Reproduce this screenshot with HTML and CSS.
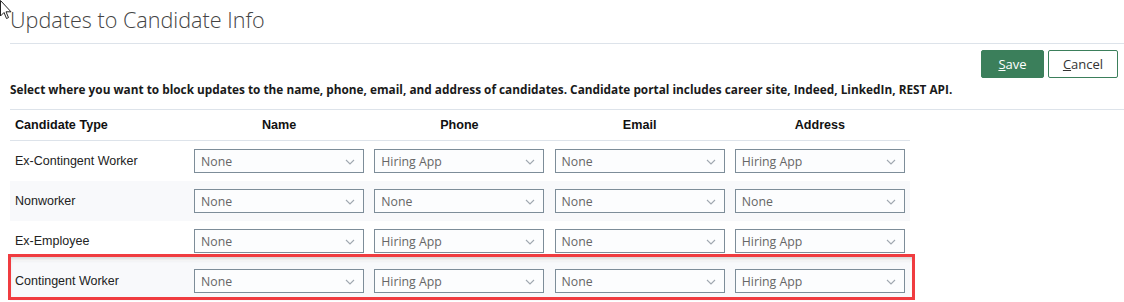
FILE: index.html
```html
<!DOCTYPE html>
<html lang="en">
<head>
  <meta charset="UTF-8" />
  <title>Updates to Candidate Info</title>
  <link rel="stylesheet" href="styles.css">
</head>
<body>
  <svg class="cursor" width="13" height="20" viewBox="0 0 13 20">
    <path d="M0.5 0.5 L0.5 16 L4 12.5 L6.5 18.5 L8.5 17.6 L6 11.8 L11 11.8 Z" fill="#fff" stroke="#222" stroke-width="1"/>
  </svg>

  <div class="page">
    <h1 class="title">Updates to Candidate Info</h1>

    <div class="toolbar">
      <button class="btn btn-save"><u>S</u>ave</button>
      <button class="btn btn-cancel"><u>C</u>ancel</button>
    </div>

    <p class="intro">Select where you want to block updates to the name, phone, email, and address of candidates. Candidate portal includes career site, Indeed, LinkedIn, REST API.</p>

    <div class="table-wrap">
      <table class="grid">
        <thead>
          <tr>
            <th class="type">Candidate Type</th>
            <th>Name</th>
            <th>Phone</th>
            <th>Email</th>
            <th>Address</th>
          </tr>
        </thead>
        <tbody>
          <tr>
            <td class="type">Ex-Contingent Worker</td>
            <td><div class="select"><span>None</span><svg width="10" height="6" viewBox="0 0 10 6"><path d="M1 1 L5 5 L9 1" fill="none" stroke="#a0a8b0" stroke-width="1.1"/></svg></div></td>
            <td><div class="select"><span>Hiring App</span><svg width="10" height="6" viewBox="0 0 10 6"><path d="M1 1 L5 5 L9 1" fill="none" stroke="#a0a8b0" stroke-width="1.1"/></svg></div></td>
            <td><div class="select"><span>None</span><svg width="10" height="6" viewBox="0 0 10 6"><path d="M1 1 L5 5 L9 1" fill="none" stroke="#a0a8b0" stroke-width="1.1"/></svg></div></td>
            <td><div class="select"><span>Hiring App</span><svg width="10" height="6" viewBox="0 0 10 6"><path d="M1 1 L5 5 L9 1" fill="none" stroke="#a0a8b0" stroke-width="1.1"/></svg></div></td>
          </tr>
          <tr class="alt">
            <td class="type">Nonworker</td>
            <td><div class="select"><span>None</span><svg width="10" height="6" viewBox="0 0 10 6"><path d="M1 1 L5 5 L9 1" fill="none" stroke="#a0a8b0" stroke-width="1.1"/></svg></div></td>
            <td><div class="select"><span>None</span><svg width="10" height="6" viewBox="0 0 10 6"><path d="M1 1 L5 5 L9 1" fill="none" stroke="#a0a8b0" stroke-width="1.1"/></svg></div></td>
            <td><div class="select"><span>None</span><svg width="10" height="6" viewBox="0 0 10 6"><path d="M1 1 L5 5 L9 1" fill="none" stroke="#a0a8b0" stroke-width="1.1"/></svg></div></td>
            <td><div class="select"><span>None</span><svg width="10" height="6" viewBox="0 0 10 6"><path d="M1 1 L5 5 L9 1" fill="none" stroke="#a0a8b0" stroke-width="1.1"/></svg></div></td>
          </tr>
          <tr>
            <td class="type">Ex-Employee</td>
            <td><div class="select"><span>None</span><svg width="10" height="6" viewBox="0 0 10 6"><path d="M1 1 L5 5 L9 1" fill="none" stroke="#a0a8b0" stroke-width="1.1"/></svg></div></td>
            <td><div class="select"><span>Hiring App</span><svg width="10" height="6" viewBox="0 0 10 6"><path d="M1 1 L5 5 L9 1" fill="none" stroke="#a0a8b0" stroke-width="1.1"/></svg></div></td>
            <td><div class="select"><span>None</span><svg width="10" height="6" viewBox="0 0 10 6"><path d="M1 1 L5 5 L9 1" fill="none" stroke="#a0a8b0" stroke-width="1.1"/></svg></div></td>
            <td><div class="select"><span>Hiring App</span><svg width="10" height="6" viewBox="0 0 10 6"><path d="M1 1 L5 5 L9 1" fill="none" stroke="#a0a8b0" stroke-width="1.1"/></svg></div></td>
          </tr>
          <tr class="alt marked">
            <td class="type">Contingent Worker</td>
            <td><div class="select"><span>None</span><svg width="10" height="6" viewBox="0 0 10 6"><path d="M1 1 L5 5 L9 1" fill="none" stroke="#a0a8b0" stroke-width="1.1"/></svg></div></td>
            <td><div class="select"><span>Hiring App</span><svg width="10" height="6" viewBox="0 0 10 6"><path d="M1 1 L5 5 L9 1" fill="none" stroke="#a0a8b0" stroke-width="1.1"/></svg></div></td>
            <td><div class="select"><span>None</span><svg width="10" height="6" viewBox="0 0 10 6"><path d="M1 1 L5 5 L9 1" fill="none" stroke="#a0a8b0" stroke-width="1.1"/></svg></div></td>
            <td><div class="select"><span>Hiring App</span><svg width="10" height="6" viewBox="0 0 10 6"><path d="M1 1 L5 5 L9 1" fill="none" stroke="#a0a8b0" stroke-width="1.1"/></svg></div></td>
          </tr>
        </tbody>
      </table>
      <div class="highlight"></div>
    </div>
  </div>
</body>
</html>
```

FILE: styles.css
```css
body {
  margin: 0;
  background: #fff;
  color: #222;
  font-family: 'Open Sans', sans-serif;
  overflow: hidden;
}
.cursor {
  position: absolute;
  left: 0;
  top: 0;
}
.page {
  padding-left: 10px;
}
.title {
  margin: 0;
  height: 43px;
  border-bottom: 1px solid #dde3ea;
  font-family: 'Open Sans', sans-serif;
  font-weight: 300;
  font-size: 21.6px;
  line-height: 40px;
  color: #444;
}
.toolbar {
  display: flex;
  justify-content: flex-end;
  gap: 4px;
  padding: 6px 6px 0 0;
}
.btn {
  height: 28px;
  font-family: 'Open Sans', sans-serif;
  font-size: 13px;
  border-radius: 2px;
  cursor: pointer;
  padding: 0;
}
.btn-save {
  width: 63px;
  background: #3b7f5b;
  border: 1px solid #3b7f5b;
  color: #fff;
}
.btn-cancel {
  width: 70px;
  background: #fff;
  border: 1px solid #3b7f5b;
  color: #333;
}
.intro {
  margin: 0;
  padding: 3px 0 11px;
  border-bottom: 1px solid #dde3ea;
  font-size: 11.82px;
  font-weight: 700;
  line-height: 17px;
  color: #1a1a1a;
  white-space: nowrap;
}
.table-wrap {
  position: relative;
}
.grid {
  border-collapse: collapse;
  width: 900px;
  font-family: 'Liberation Sans', Arial, sans-serif;
  font-size: 12.5px;
}
.grid th {
  height: 30px;
  padding: 0;
  font-size: 12.6px;
  font-weight: 700;
  color: #111;
  text-align: center;
  border-bottom: 1px solid #dde3ea;
}
.grid th.type {
  text-align: left;
  padding-left: 5px;
  width: 174px;
}
.grid td {
  height: 40px;
  padding: 0 0 0 5px;
  color: #222;
}
.grid td.type {
  padding-left: 5px;
}
.grid tr.alt td {
  background: #f8f9fb;
}
.select {
  display: flex;
  align-items: center;
  justify-content: space-between;
  box-sizing: border-box;
  width: 170px;
  height: 24px;
  padding: 0 8px 0 6px;
  border: 1px solid #7d8d99;
  background: #fcfdfe;
  font-family: 'Open Sans', sans-serif;
  font-size: 12.3px;
  color: #666;
}
.select svg {
  margin-top: 1px;
}
.highlight {
  position: absolute;
  left: -2px;
  top: 144px;
  width: 901px;
  height: 40px;
  border: 3px solid #f03c40;
  box-shadow: inset 0 4px 4px -2px rgba(0, 0, 0, 0.18);
  pointer-events: none;
}
```
